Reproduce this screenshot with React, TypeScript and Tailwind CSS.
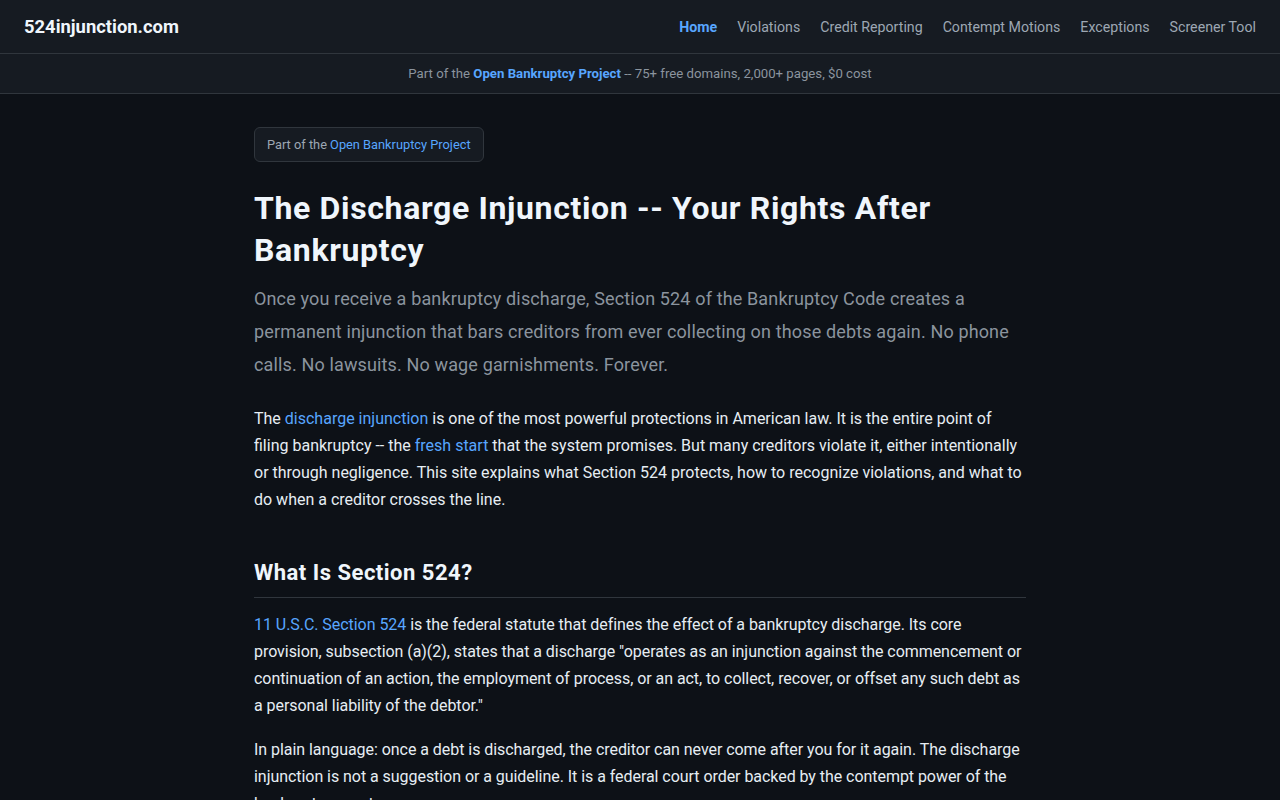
import React from "react";

export default function App() {
  const nav = ["Home", "Violations", "Credit Reporting", "Contempt Motions", "Exceptions", "Screener Tool"];
  return (
    <div className="min-h-screen bg-[#0d1117] text-[#e6edf3] font-['Roboto',sans-serif]">
      <header className="h-[54px] bg-[#161b22] border-b border-[#30363d] flex items-center justify-between px-6">
        <div className="text-[18.4px] font-bold text-[#f0f6fc]">524injunction.com</div>
        <nav className="flex items-center gap-5 text-[14.2px] pt-[2px]">
          {nav.map((n, i) => (
            <a key={n} className={i === 0 ? "text-[#58a6ff] font-bold" : "text-[#9da7b3]"}>{n}</a>
          ))}
        </nav>
      </header>
      <div className="h-[40px] bg-[#161b22] border-b border-[#30363d] flex items-center justify-center text-[13.2px] text-[#8b949e] pt-[1px]">
        <span>
          Part of the <a className="text-[#58a6ff] font-bold">Open Bankruptcy Project</a> -- 75+ free domains, 2,000+ pages, $0 cost
        </span>
      </div>
      <main className="max-w-[820px] mx-auto px-6 pt-[33px]">
        <div className="inline-block border border-[#30363d] bg-[#161b22] rounded-md px-3 py-[7px] text-[12.8px] text-[#9da7b3]">
          Part of the <a className="text-[#58a6ff]">Open Bankruptcy Project</a>
        </div>
        <h1 className="mt-[25px] text-[32px] leading-[42px] font-bold text-[#f0f6fc] tracking-[0.65px]">
          The Discharge Injunction -- Your Rights After Bankruptcy
        </h1>
        <p className="mt-[11px] text-[18px] leading-[33px] text-[#8b949e] tracking-[0.14px]">
          Once you receive a bankruptcy discharge, Section 524 of the Bankruptcy Code creates a permanent injunction that bars creditors from ever collecting on those debts again. No phone calls. No lawsuits. No wage garnishments. Forever.
        </p>
        <p className="mt-[24px] text-[16px] leading-[27px]">
          The <a className="text-[#58a6ff]">discharge injunction</a> is one of the most powerful protections in American law. It is the entire point of filing bankruptcy -- the <a className="text-[#58a6ff]">fresh start</a> that the system promises. But many creditors violate it, either intentionally or through negligence. This site explains what Section 524 protects, how to recognize violations, and what to do when a creditor crosses the line.
        </p>
        <h2 className="mt-[45px] text-[22px] leading-[30px] font-bold text-[#f0f6fc] tracking-[0.5px] pb-[9px] border-b border-[#30363d]">
          What Is Section 524?
        </h2>
        <p className="mt-[13px] text-[16px] leading-[27px] tracking-[-0.05px]">
          <a className="text-[#58a6ff]">11 U.S.C. Section 524</a> is the federal statute that defines the effect of a bankruptcy discharge. Its core provision, subsection (a)(2), states that a discharge "operates as an injunction against the commencement or continuation of an action, the employment of process, or an act, to collect, recover, or offset any such debt as a personal liability of the debtor."
        </p>
        <p className="mt-[17px] text-[16px] leading-[27px] tracking-[-0.05px]">
          In plain language: once a debt is discharged, the creditor can never come after you for it again. The discharge injunction is not a suggestion or a guideline. It is a federal court order backed by the contempt power of the bankruptcy court.
        </p>
      </main>
    </div>
  );
}
